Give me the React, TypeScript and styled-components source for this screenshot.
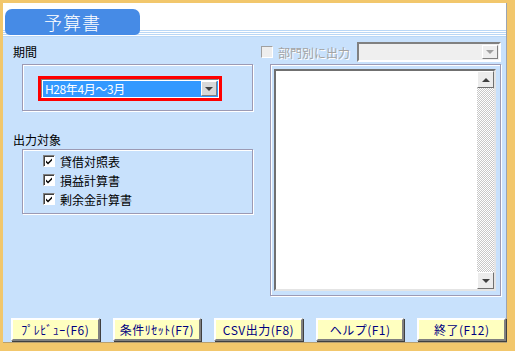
import styled, { createGlobalStyle } from 'styled-components';

const GlobalStyle = createGlobalStyle`
  html, body {
    margin: 0;
    padding: 0;
    background: #ffffff;
  }
  body {
    font-family: "Noto Sans CJK JP", "DejaVu Sans", sans-serif;
    font-size: 12px;
  }
`;

const buttons = ['ﾌﾟﾚﾋﾞｭｰ(F6)', '条件ﾘｾｯﾄ(F7)', 'CSV出力(F8)', 'ヘルプ(F1)', '終了(F12)'];
const targets = ['貸借対照表', '損益計算書', '剰余金計算書'];

const App = () => {
  return (
    <>
      <GlobalStyle />
      <Frame>
        <Header>
          <TitleTab>予算書</TitleTab>
        </Header>
        <Body>
          <Columns>
            <LeftColumn>
              <SectionLabel>期間</SectionLabel>
              <GroupBox height={47}>
                <PeriodHighlight>
                  <PeriodSelect>
                    <PeriodValue>H28年4月～3月</PeriodValue>
                    <DropButton>
                      <Arrow />
                    </DropButton>
                  </PeriodSelect>
                </PeriodHighlight>
              </GroupBox>
              <SectionLabel top={22}>出力対象</SectionLabel>
              <GroupBox height={65} top={2}>
                <CheckList>
                  {targets.map((t) => (
                    <CheckRow key={t}>
                      <CheckBox>
                        <CheckMark viewBox="0 0 8 8">
                          <path d="M1 3.5 L3 5.5 L7 1.5 L7 3.5 L3 7.5 L1 5.5 Z" fill="#000" />
                        </CheckMark>
                      </CheckBox>
                      <span>{t}</span>
                    </CheckRow>
                  ))}
                </CheckList>
              </GroupBox>
            </LeftColumn>
            <RightColumn>
              <DeptRow>
                <CheckBox disabled />
                <DisabledText>部門別に出力</DisabledText>
                <DeptSelect>
                  <DropButton disabled>
                    <Arrow disabled />
                  </DropButton>
                </DeptSelect>
              </DeptRow>
              <ListFrame>
                <ListBox>
                  <ListArea />
                  <ScrollBar>
                    <ScrollButton>
                      <Arrow up />
                    </ScrollButton>
                    <ScrollTrack />
                    <ScrollButton>
                      <Arrow />
                    </ScrollButton>
                  </ScrollBar>
                </ListBox>
              </ListFrame>
            </RightColumn>
          </Columns>
          <ButtonBar>
            {buttons.map((b) => (
              <FuncButton key={b}>{b}</FuncButton>
            ))}
          </ButtonBar>
        </Body>
      </Frame>
    </>
  );
};

const Frame = styled.div`
  width: 515px;
  height: 351px;
  box-sizing: border-box;
  border-style: solid;
  border-color: #f2c76c;
  border-width: 3px 8px 8px 3px;
  display: flex;
  flex-direction: column;
  background: #c8e1fc;
`;

const Header = styled.div`
  height: 34px;
  flex-shrink: 0;
  background:
    linear-gradient(#b9d7f6, #b9d7f6) 0 33px / 100% 1px no-repeat,
    repeating-linear-gradient(#b9d7f6 0 1px, #ffffff 1px 2px) 0 27px / 100% 6px no-repeat,
    #ffffff;
  padding: 6px 0 0 2px;
  box-sizing: border-box;
  border-right: 1px solid #9aa4b4;
`;

const TitleTab = styled.div`
  width: 135px;
  height: 26px;
  border-radius: 7px 7px 5px 5px;
  background: #468be6;
  color: #ffffff;
  font-size: 18px;
  font-weight: 300;
  letter-spacing: 1px;
  line-height: 26px;
  text-align: center;
`;

const Body = styled.div`
  flex: 1;
  display: flex;
  flex-direction: column;
  border-right: 1px solid #9aa4b4;
  border-bottom: 1px solid #b8a070;
`;

const Columns = styled.div`
  display: flex;
`;

const LeftColumn = styled.div`
  width: 255px;
  display: flex;
  flex-direction: column;
`;

const SectionLabel = styled.div<{ top?: number }>`
  margin: ${(p) => p.top ?? 8}px 0 0 10px;
  height: 14px;
  line-height: 14px;
  color: #000000;
  font-size: 12px;
`;

const GroupBox = styled.div<{ height: number; top?: number }>`
  margin: ${(p) => p.top ?? 5}px 0 0 19px;
  width: 231px;
  height: ${(p) => p.height}px;
  box-sizing: border-box;
  border: 1px solid #9c9ab4;
  box-shadow: inset 1px 1px 0 #ffffff, 1px 1px 0 #ffffff;
`;

const PeriodHighlight = styled.div`
  margin: 11px 0 0 15px;
  width: 184px;
  height: 25px;
  box-sizing: border-box;
  border: 3px solid #ff0000;
`;

const PeriodSelect = styled.div`
  height: 19px;
  box-sizing: border-box;
  border: 1px solid;
  border-color: #808080 #ffffff #ffffff #808080;
  background: #3399ff;
  display: flex;
  align-items: stretch;
  padding: 1px;
  box-shadow: inset 1px 1px 0 #ffffff;
`;

const PeriodValue = styled.div`
  flex: 1;
  color: #ffffff;
  font-size: 12px;
  letter-spacing: -0.4px;
  line-height: 15px;
  padding-left: 2px;
`;

const DropButton = styled.div<{ disabled?: boolean }>`
  width: 16px;
  box-sizing: border-box;
  background: ${(p) => (p.disabled ? '#eeeeee' : '#d8d8d8')};
  border: 1px solid;
  border-color: #ffffff #808080 #808080 #ffffff;
  display: flex;
  align-items: center;
  justify-content: center;
`;

const Arrow = styled.div<{ up?: boolean; disabled?: boolean }>`
  width: 0;
  height: 0;
  border-left: 4px solid transparent;
  border-right: 4px solid transparent;
  ${(p) =>
    p.up
      ? `border-bottom: 4px solid #404040;`
      : `border-top: 4px solid ${p.disabled ? '#a0a0a0' : '#404040'};`}
`;

const CheckList = styled.div`
  padding: 4px 0 0 20px;
  display: flex;
  flex-direction: column;
  gap: 5px;
`;

const CheckRow = styled.div`
  display: flex;
  align-items: center;
  gap: 5px;
  height: 14px;
  font-size: 12px;
  color: #000000;
`;

const CheckBox = styled.div<{ disabled?: boolean }>`
  width: 12px;
  height: 12px;
  box-sizing: border-box;
  flex-shrink: 0;
  background: ${(p) => (p.disabled ? '#eeeeee' : '#ffffff')};
  border: 1px solid;
  border-color: ${(p) => (p.disabled ? '#a0a0a0 #ffffff #ffffff #a0a0a0' : '#808080 #ffffff #ffffff #808080')};
  box-shadow: ${(p) => (p.disabled ? 'none' : 'inset 1px 1px 0 #404040')};
  display: flex;
  align-items: center;
  justify-content: center;
`;

const CheckMark = styled.svg`
  width: 8px;
  height: 8px;
`;

const RightColumn = styled.div`
  flex: 1;
  display: flex;
  flex-direction: column;
`;

const DeptRow = styled.div`
  margin: 5px 0 0 3px;
  height: 20px;
  display: flex;
  align-items: center;
`;

const DisabledText = styled.span`
  margin-left: 5px;
  color: #a4a4a4;
  text-shadow: 1px 1px 0 #ffffff;
  font-size: 12px;
  width: 79px;
`;

const DeptSelect = styled.div`
  width: 144px;
  height: 20px;
  box-sizing: border-box;
  border: 2px solid;
  border-color: #808080 #ffffff #ffffff #808080;
  background: #efefef;
  display: flex;
  justify-content: flex-end;
  padding: 1px;
`;

const ListFrame = styled.div`
  margin: 2px 0 0 12px;
  width: 231px;
  height: 232px;
  box-sizing: border-box;
  border: 1px solid #9c9ab4;
  box-shadow: inset 1px 1px 0 #ffffff, 1px 1px 0 #ffffff;
  padding: 4px 4px 4px 3px;
`;

const ListBox = styled.div`
  height: 100%;
  box-sizing: border-box;
  border: 2px solid;
  border-color: #707070 #e4e4e4 #e4e4e4 #707070;
  background: #ffffff;
  display: flex;
`;

const ListArea = styled.div`
  flex: 1;
`;

const ScrollBar = styled.div`
  width: 17px;
  display: flex;
  flex-direction: column;
`;

const ScrollButton = styled.div`
  height: 17px;
  box-sizing: border-box;
  background: #ececec;
  border: 1px solid;
  border-color: #ffffff #707070 #707070 #ffffff;
  display: flex;
  align-items: center;
  justify-content: center;
`;

const ScrollTrack = styled.div`
  flex: 1;
  background: repeating-conic-gradient(#ffffff 0 25%, #c8c8c8 0 50%) 0 0 / 2px 2px;
`;

const ButtonBar = styled.div`
  margin-top: auto;
  padding: 0 0 1px 8px;
  display: flex;
  gap: 13px;
`;

const FuncButton = styled.div`
  width: 89px;
  height: 23px;
  box-sizing: border-box;
  background: #ffffc0;
  border: 2px solid;
  border-color: #ffffff #808080 #808080 #ffffff;
  box-shadow: 1px 1px 0 #404040;
  color: #000080;
  font-size: 12px;
  letter-spacing: 0.5px;
  display: flex;
  align-items: center;
  justify-content: center;
`;

export default App;
